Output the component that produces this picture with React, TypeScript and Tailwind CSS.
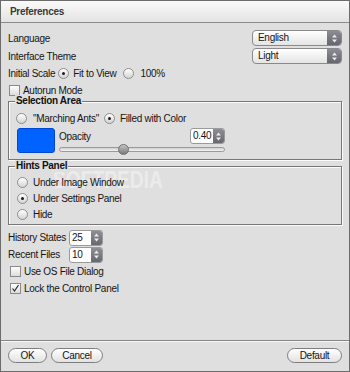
import React from "react";

// small up/down arrows used in the dropdowns and spin boxes
function Arrows() {
  return (
    <svg width="5" height="9" viewBox="0 0 5 9">
      <polygon points="0,3.5 2.5,0.5 5,3.5" fill="#ececec" />
      <polygon points="0,5.5 2.5,8.5 5,5.5" fill="#ececec" />
    </svg>
  );
}

function Radio({ checked = false }: { checked?: boolean }) {
  return (
    <span className="w-[11px] h-[11px] shrink-0 rounded-full border border-[#8e8e8e] bg-linear-to-b from-white to-[#d4d4d4] flex items-center justify-center">
      {checked && <span className="w-[3px] h-[3px] rounded-full bg-[#1c1c1c]" />}
    </span>
  );
}

function Checkbox({ checked = false }: { checked?: boolean }) {
  return (
    <span className="w-[11px] h-[11px] shrink-0 border border-[#8a8a8a] bg-linear-to-b from-white to-[#dcdcdc] flex items-center justify-center">
      {checked && (
        <svg width="9" height="9" viewBox="0 0 9 9">
          <polyline points="1.5,4.5 3.5,7 7.5,1" fill="none" stroke="#2a2a2a" strokeWidth="1.2" />
        </svg>
      )}
    </span>
  );
}

function Select({ value }: { value: string }) {
  return (
    <div className="w-[90px] h-[16px] flex rounded-[4px] border border-[#8a8a8a] overflow-hidden bg-linear-to-b from-white to-[#e4e4e4]">
      <span className="flex-1 pl-[5px] leading-[14px]">{value}</span>
      <span className="w-[14px] flex items-center justify-center bg-linear-to-b from-[#8c8c94] to-[#66666e]">
        <Arrows />
      </span>
    </div>
  );
}

function Spin({ value, w }: { value: string; w: string }) {
  return (
    <div className={`${w} h-[16px] flex rounded-[3px] border border-[#9a9a9a] overflow-hidden bg-white`}>
      <span className="flex-1 pl-[2px] leading-[14px]">{value}</span>
      <span className="w-[11px] flex items-center justify-center bg-linear-to-b from-[#8e8e96] to-[#68686f]">
        <Arrows />
      </span>
    </div>
  );
}

function Group({ title, className, children }: { title: string; className: string; children: React.ReactNode }) {
  return (
    <div className={`relative border border-[#777] shadow-[inset_1px_1px_0_#fbfbfb,1px_1px_0_#fbfbfb] ${className}`}>
      <span className="absolute -top-[7px] left-[6px] px-[1px] bg-[#dfdfdf] font-bold leading-[12px] text-[#111]">
        {title}
      </span>
      {children}
    </div>
  );
}

function Button({ label, w }: { label: string; w: string }) {
  return (
    <div className={`${w} h-[15px] rounded-full border border-[#7e7e7e] bg-linear-to-b from-white to-[#e2e2e2] flex items-center justify-center leading-none`}>
      {label}
    </div>
  );
}

export default function App() {
  return (
    <div className="relative w-[350px] h-[372px] flex flex-col overflow-hidden border border-[#6c6c6c] bg-[#dfdfdf] text-[10px] tracking-[-0.3px] text-[#151515] font-['Liberation_Sans',Arial,sans-serif]">
      {/* faint watermark, sits behind the controls */}
      <span className="pointer-events-none absolute z-0 left-[52px] top-[161px] origin-left scale-x-[0.8] text-[24px] font-bold tracking-[0px] text-white/40">
        SOFTPEDIA
      </span>

      {/* title bar */}
      <div className="relative z-10 h-[22px] shrink-0 flex items-center pl-[9px] border-b border-[#8a8a8a] bg-linear-to-b from-[#fafafa] to-[#e3e3e3] font-bold text-[#3a3a3a]">
        Preferences
      </div>

      <div className="relative z-10 flex-1 flex flex-col px-[7px] pt-[6px]">
        <div className="h-[18px] flex items-center justify-between">
          <span>Language</span>
          <Select value="English" />
        </div>
        <div className="h-[18px] flex items-center justify-between">
          <span>Interface Theme</span>
          <Select value="Light" />
        </div>
        <div className="h-[17px] flex items-center">
          <span>Initial Scale</span>
          <span className="ml-[3px]"><Radio checked /></span>
          <span className="ml-[4px]">Fit to View</span>
          <span className="ml-[7px]"><Radio /></span>
          <span className="ml-[6px]">100%</span>
        </div>
        <div className="h-[17px] flex items-center pl-[1px]">
          <Checkbox />
          <span className="ml-[3px]">Autorun Mode</span>
        </div>

        <Group title="Selection Area" className="mt-[2px] pt-[8px] pb-[4px]">
          <div className="h-[16px] flex items-center pl-[7px]">
            <Radio />
            <span className="ml-[6px]">"Marching Ants"</span>
            <span className="ml-[5px]"><Radio checked /></span>
            <span className="ml-[5px]">Filled with Color</span>
          </div>
          <div className="mt-[2px] flex pl-[8px]">
            <div className="w-[38px] h-[25px] rounded-[3px] border border-[#0048d8] bg-[#0062ff]" />
            <div className="ml-[4px] w-[166px] flex flex-col">
              <div className="h-[16px] flex items-center justify-between">
                <span>Opacity</span>
                <Spin value="0.40" w="w-[35px]" />
              </div>
              <div className="relative h-[11px]">
                <div className="mt-[3px] h-[5px] rounded-full border border-[#9a9a9a] bg-linear-to-b from-[#cfcfcf] to-[#f4f4f4]" />
                <span className="absolute left-[59px] top-0 w-[11px] h-[11px] rounded-full border border-[#707070] bg-linear-to-b from-[#c4c4c4] to-[#7a7a7a]" />
              </div>
            </div>
          </div>
        </Group>

        <Group title="Hints Panel" className="mt-[6px] pt-[7px] pb-[2px]">
          <div className="h-[16px] flex items-center pl-[8px]">
            <Radio />
            <span className="ml-[5px]">Under Image Window</span>
          </div>
          <div className="h-[16px] flex items-center pl-[8px]">
            <Radio checked />
            <span className="ml-[5px]">Under Settings Panel</span>
          </div>
          <div className="h-[16px] flex items-center pl-[8px]">
            <Radio />
            <span className="ml-[5px]">Hide</span>
          </div>
        </Group>

        <div className="mt-[4px] h-[17px] flex items-center">
          <span className="w-[61px]">History States</span>
          <Spin value="25" w="w-[34px]" />
        </div>
        <div className="h-[17px] flex items-center">
          <span className="w-[61px]">Recent Files</span>
          <Spin value="10" w="w-[34px]" />
        </div>
        <div className="h-[17px] flex items-center pl-[2px]">
          <Checkbox />
          <span className="ml-[3px]">Use OS File Dialog</span>
        </div>
        <div className="h-[17px] flex items-center pl-[2px]">
          <Checkbox checked />
          <span className="ml-[3px]">Lock the Control Panel</span>
        </div>
      </div>

      {/* footer buttons */}
      <div className="relative z-10 h-[31px] shrink-0 flex items-start px-[7px] pt-[7px] border-t border-[#858585] shadow-[inset_0_1px_0_#f8f8f8]">
        <Button label="OK" w="w-[39px]" />
        <span className="ml-[4px]"><Button label="Cancel" w="w-[52px]" /></span>
        <span className="ml-auto"><Button label="Default" w="w-[55px]" /></span>
      </div>
    </div>
  );
}
